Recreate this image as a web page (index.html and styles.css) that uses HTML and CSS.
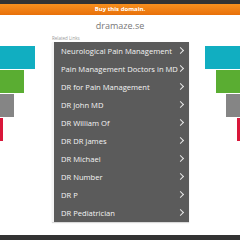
FILE: index.html
```html
<!DOCTYPE html>
<html>
<head>
<meta charset="utf-8">
<link rel="stylesheet" href="styles.css">
</head>
<body>
<div class="topbar"></div>
<div class="buy">Buy this domain.</div>
<div class="domain">dramaze.se</div>
<div class="main">
  <div class="deco deco-left">
    <div class="bar cyan" style="width:35px"></div>
    <div class="bar green" style="width:24px"></div>
    <div class="bar gray" style="width:14px"></div>
    <div class="bar red" style="width:3px"></div>
  </div>
  <div class="center">
    <div class="related">Related Links</div>
    <ul class="links">
      <li class="c1">Neurological Pain Management</li>
      <li class="c2">Pain Management Doctors in MD</li>
      <li class="c3">DR for Pain Management</li>
      <li class="c4">DR John MD</li>
      <li class="c5">DR William Of</li>
      <li class="c1">DR DR James</li>
      <li class="c2">DR Michael</li>
      <li class="c3">DR Number</li>
      <li class="c4">DR P</li>
      <li class="c5">DR Pediatrician</li>
    </ul>
  </div>
  <div class="deco deco-right">
    <div class="bar cyan" style="width:35px"></div>
    <div class="bar green" style="width:24px"></div>
    <div class="bar gray" style="width:14px"></div>
    <div class="bar red" style="width:3px"></div>
  </div>
</div>
<div class="footer"></div>
</body>
</html>
```
FILE: styles.css
```css
html, body { margin: 0; padding: 0; }
body {
  width: 240px;
  height: 240px;
  overflow: hidden;
  background: #fff;
  font-family: "Open Sans", "Liberation Sans", sans-serif;
  position: relative;
}
.topbar { height: 4px; background: #333; }
.buy {
  height: 11px;
  background: linear-gradient(#f7901e, #e8700a);
  color: #fff;
  font-size: 6px;
  font-weight: 700;
  line-height: 11px;
  text-align: center;
}
.domain {
  margin-top: 5px;
  height: 12px;
  line-height: 12px;
  text-align: center;
  font-size: 9px;
  color: #777;
}
.main {
  display: flex;
  margin-top: 3px;
}
.deco {
  display: flex;
  flex-direction: column;
  gap: 1px;
  padding-top: 11px;
}
.deco-left { width: 52px; }
.deco-right { flex: 1; align-items: flex-end; }
.bar { height: 23px; }
.cyan { background: #11aec1; }
.green { background: #5aad32; }
.gray { background: #858585; }
.red { background: #d9173a; }
.center {
  width: 137px;
}
.related {
  font-size: 4.5px;
  color: #999;
  height: 7px;
  line-height: 7px;
}
.links {
  list-style: none;
  margin: 0;
  padding: 0;
  background: #5b5b5b;
  box-shadow: 0 1px 1px rgba(0,0,0,0.15);
}
.links li {
  height: 18px;
  line-height: 18px;
  color: #f4f4f4;
  font-size: 7.6px;
  padding-left: 7px;
  border-left: 2px solid;
  position: relative;
  white-space: nowrap;
}
.links li::after {
  content: "";
  position: absolute;
  right: 6px;
  top: 6px;
  width: 4px;
  height: 4px;
  border-top: 1px solid #e6e6e6;
  border-right: 1px solid #e6e6e6;
  transform: rotate(45deg);
}
.c1 { border-left-color: #1e7f86; }
.c2 { border-left-color: #a8c73c; }
.c3 { border-left-color: #e3c526; }
.c4 { border-left-color: #e57a1d; }
.c5 { border-left-color: #1b4f6b; }
.footer {
  position: absolute;
  left: 0;
  right: 0;
  bottom: 0;
  height: 5px;
  background: #333;
}
```
